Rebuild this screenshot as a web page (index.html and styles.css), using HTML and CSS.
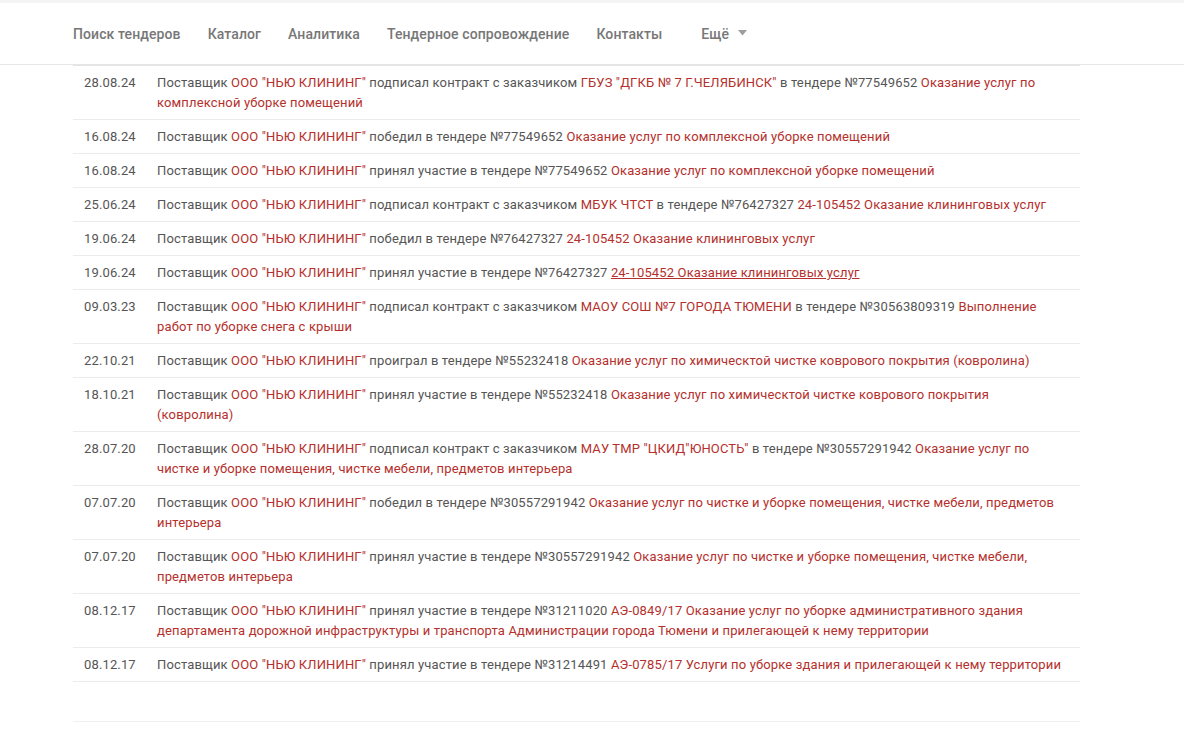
FILE: index.html
```html
<!DOCTYPE html>
<html lang="ru">
<head>
<meta charset="utf-8">
<title>Тендеры</title>
<link rel="stylesheet" href="styles.css">
</head>
<body>
<header class="topbar">
  <nav class="nav">
    <a class="nav-item" href="#">Поиск тендеров</a>
    <a class="nav-item" href="#">Каталог</a>
    <a class="nav-item" href="#">Аналитика</a>
    <a class="nav-item" href="#">Тендерное сопровождение</a>
    <a class="nav-item" href="#">Контакты</a>
    <a class="nav-item nav-more" href="#">Ещё <svg class="caret" width="9" height="6" viewBox="0 0 9 6"><path d="M0 0H9L4.5 5.5Z" fill="#9e9e9e"/></svg></a>
  </nav>
</header>
<main class="container">
  <div class="events">
    <div class="row"><div class="date">28.08.24</div><div class="text">Поставщик <a class="red" href="#">ООО "НЬЮ КЛИНИНГ"</a> подписал контракт с заказчиком <a class="red" href="#">ГБУЗ "ДГКБ № 7 Г.ЧЕЛЯБИНСК"</a> в тендере №77549652 <a class="red" href="#">Оказание услуг по комплексной уборке помещений</a></div></div>
    <div class="row"><div class="date">16.08.24</div><div class="text">Поставщик <a class="red" href="#">ООО "НЬЮ КЛИНИНГ"</a> победил в тендере №77549652 <a class="red" href="#">Оказание услуг по комплексной уборке помещений</a></div></div>
    <div class="row"><div class="date">16.08.24</div><div class="text">Поставщик <a class="red" href="#">ООО "НЬЮ КЛИНИНГ"</a> принял участие в тендере №77549652 <a class="red" href="#">Оказание услуг по комплексной уборке помещений</a></div></div>
    <div class="row"><div class="date">25.06.24</div><div class="text">Поставщик <a class="red" href="#">ООО "НЬЮ КЛИНИНГ"</a> подписал контракт с заказчиком <a class="red" href="#">МБУК ЧТСТ</a> в тендере №76427327 <a class="red" href="#">24-105452 Оказание клининговых услуг</a></div></div>
    <div class="row"><div class="date">19.06.24</div><div class="text">Поставщик <a class="red" href="#">ООО "НЬЮ КЛИНИНГ"</a> победил в тендере №76427327 <a class="red" href="#">24-105452 Оказание клининговых услуг</a></div></div>
    <div class="row"><div class="date">19.06.24</div><div class="text">Поставщик <a class="red" href="#">ООО "НЬЮ КЛИНИНГ"</a> принял участие в тендере №76427327 <a class="red hover" href="#">24-105452 Оказание клининговых услуг</a></div></div>
    <div class="row"><div class="date">09.03.23</div><div class="text">Поставщик <a class="red" href="#">ООО "НЬЮ КЛИНИНГ"</a> подписал контракт с заказчиком <a class="red" href="#">МАОУ СОШ №7 ГОРОДА ТЮМЕНИ</a> в тендере №30563809319 <a class="red" href="#">Выполнение работ по уборке снега с крыши</a></div></div>
    <div class="row"><div class="date">22.10.21</div><div class="text">Поставщик <a class="red" href="#">ООО "НЬЮ КЛИНИНГ"</a> проиграл в тендере №55232418 <a class="red" href="#">Оказание услуг по химическтой чистке коврового покрытия (ковролина)</a></div></div>
    <div class="row"><div class="date">18.10.21</div><div class="text">Поставщик <a class="red" href="#">ООО "НЬЮ КЛИНИНГ"</a> принял участие в тендере №55232418 <a class="red" href="#">Оказание услуг по химическтой чистке коврового покрытия (ковролина)</a></div></div>
    <div class="row"><div class="date">28.07.20</div><div class="text">Поставщик <a class="red" href="#">ООО "НЬЮ КЛИНИНГ"</a> подписал контракт с заказчиком <a class="red" href="#">МАУ ТМР "ЦКИД"ЮНОСТЬ"</a> в тендере №30557291942 <a class="red" href="#">Оказание услуг по чистке и уборке помещения, чистке мебели, предметов интерьера</a></div></div>
    <div class="row"><div class="date">07.07.20</div><div class="text">Поставщик <a class="red" href="#">ООО "НЬЮ КЛИНИНГ"</a> победил в тендере №30557291942 <a class="red" href="#">Оказание услуг по чистке и уборке помещения, чистке мебели, предметов интерьера</a></div></div>
    <div class="row"><div class="date">07.07.20</div><div class="text">Поставщик <a class="red" href="#">ООО "НЬЮ КЛИНИНГ"</a> принял участие в тендере №30557291942 <a class="red" href="#">Оказание услуг по чистке и уборке помещения, чистке мебели, предметов интерьера</a></div></div>
    <div class="row"><div class="date">08.12.17</div><div class="text">Поставщик <a class="red" href="#">ООО "НЬЮ КЛИНИНГ"</a> принял участие в тендере №31211020 <a class="red" href="#">АЭ-0849/17 Оказание услуг по уборке административного здания департамента дорожной инфраструктуры и транспорта Администрации города Тюмени и прилегающей к нему территории</a></div></div>
    <div class="row"><div class="date">08.12.17</div><div class="text">Поставщик <a class="red" href="#">ООО "НЬЮ КЛИНИНГ"</a> принял участие в тендере №31214491 <a class="red" href="#">АЭ-0785/17 Услуги по уборке здания и прилегающей к нему территории</a></div></div>
  </div>
  <div class="footer-line"></div>
</main>
</body>
</html>
```
FILE: styles.css
```css
html, body {
  margin: 0;
  padding: 0;
  background: #fff;
}
body {
  font-family: Roboto, "Liberation Sans", Arial, sans-serif;
  color: #555;
  border-top: 3px solid #f4f4f4;
}
a {
  text-decoration: none;
}
.topbar {
  height: 61px;
  border-bottom: 1px solid #e6e6e6;
  display: flex;
  align-items: center;
}
.nav {
  margin-left: 73px;
  display: flex;
  align-items: center;
  gap: 27px;
}
.nav-item {
  font-size: 14px;
  font-weight: 500;
  color: #777;
  line-height: 20px;
  letter-spacing: 0.1px;
  display: flex;
  align-items: center;
}
.nav-more {
  margin-left: 12px;
  gap: 9px;
}
.caret {
  display: block;
  margin-top: -1px;
}
.container {
  margin-left: 73px;
  width: 1007px;
}
.events {
  border-top: 1px solid #e4e4e4;
}
.row {
  display: grid;
  grid-template-columns: 84px 1fr;
  border-bottom: 1px solid #ececec;
  font-size: 13px;
  line-height: 20px;
  letter-spacing: 0.14px;
  padding: 7px 0 6px;
}
.date {
  padding-left: 11px;
  color: #555;
}
.text {
  padding-right: 14px;
  color: #555;
}
.red {
  color: #b5302c;
}
.red.hover {
  text-decoration: underline;
}
.footer-line {
  height: 39px;
  border-bottom: 1px solid #f0f0f0;
}
```
